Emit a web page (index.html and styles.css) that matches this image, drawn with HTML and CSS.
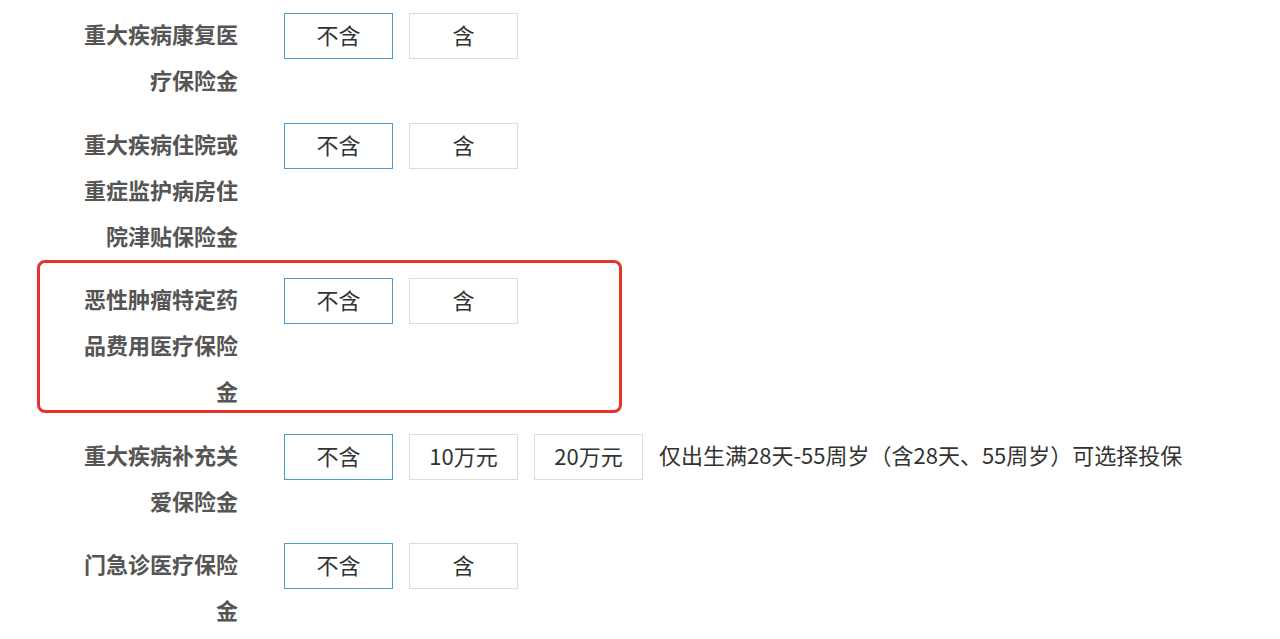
FILE: index.html
```html
<!DOCTYPE html>
<html lang="zh-CN">
<head>
    <meta charset="UTF-8">
    <meta name="viewport" content="width=device-width, initial-scale=1.0">
    <title>保障责任选择</title>
    <link rel="stylesheet" href="styles.css">
</head>
<body>
    <div class="form">
        <div class="form-row">
            <div class="label">重大疾病康复医疗保险金</div>
            <div class="options">
                <span class="opt selected">不含</span>
                <span class="opt">含</span>
            </div>
        </div>

        <div class="form-row">
            <div class="label">重大疾病住院或重症监护病房住院津贴保险金</div>
            <div class="options">
                <span class="opt selected">不含</span>
                <span class="opt">含</span>
            </div>
        </div>

        <div class="form-row">
            <div class="label">恶性肿瘤特定药品费用医疗保险金</div>
            <div class="options">
                <span class="opt selected">不含</span>
                <span class="opt">含</span>
            </div>
        </div>

        <div class="form-row">
            <div class="label">重大疾病补充关爱保险金</div>
            <div class="options">
                <span class="opt selected">不含</span>
                <span class="opt">10万元</span>
                <span class="opt">20万元</span>
                <span class="tip">仅出生满28天-55周岁（含28天、55周岁）可选择投保</span>
            </div>
        </div>

        <div class="form-row">
            <div class="label">门急诊医疗保险金</div>
            <div class="options">
                <span class="opt selected">不含</span>
                <span class="opt">含</span>
            </div>
        </div>
    </div>

    <!-- annotation box over the third row -->
    <div class="highlight"></div>
</body>
</html>
```

FILE: styles.css
```css
* {
    margin: 0;
    padding: 0;
    box-sizing: border-box;
}

body {
    font-family: "Noto Sans CJK SC", "Noto Sans", sans-serif;
    background: #fff;
    color: #333;
    font-size: 22px;
    position: relative;
    min-height: 639px;
    overflow: hidden;
}

.form {
    padding: 13px 0 0 84px;
}

.form-row {
    display: flex;
    align-items: flex-start;
    margin-bottom: 17.5px;
}

.label {
    width: 154px;
    flex-shrink: 0;
    text-align: right;
    line-height: 46px;
    margin-top: -3px;
    margin-bottom: 3px;
    font-weight: bold;
    color: #555;
}

.options {
    display: flex;
    align-items: center;
    gap: 16px;
    margin-left: 46px;
}

.opt {
    display: flex;
    align-items: center;
    justify-content: center;
    width: 109px;
    height: 46px;
    padding-bottom: 4px;
    border: 1px solid #dcdcdc;
    background: #fff;
    color: #333;
    cursor: pointer;
}

.opt.selected {
    border: 1.5px solid #4a9cc8;
}

.tip {
    color: #333;
    white-space: nowrap;
    padding-bottom: 6px;
}

.highlight {
    position: absolute;
    left: 37px;
    top: 260px;
    width: 585px;
    height: 153px;
    border: 3px solid #e63329;
    border-radius: 8px;
    pointer-events: none;
}
```
